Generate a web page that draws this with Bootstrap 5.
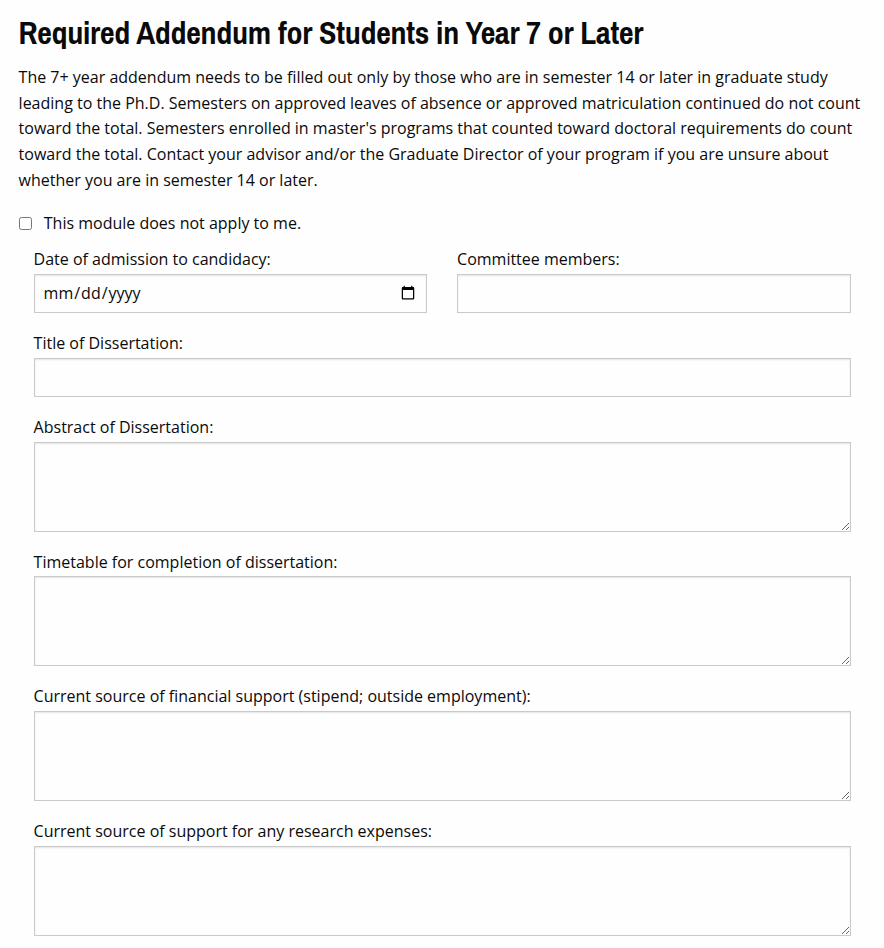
<!DOCTYPE html>
<html lang="en">
<head>
<meta charset="utf-8">
<meta name="viewport" content="width=device-width, initial-scale=1">
<title>Required Addendum</title>
<link href="https://cdn.jsdelivr.net/npm/bootstrap@5.3.0/dist/css/bootstrap.min.css" rel="stylesheet">
<style>
body{font-family:"Open Sans",sans-serif;color:#0a0a0a;background:#fefefe;line-height:1.5;overflow:hidden}
.addendum{padding:11px 18.5px 0 18.6px}
.addendum-title{font-family:"Archivo Narrow","Liberation Sans Narrow","Liberation Sans",sans-serif;font-weight:700;font-size:32px;line-height:44.8px;letter-spacing:-.28px;margin:0 0 9.35px;white-space:nowrap}
.intro{line-height:25.6px;margin-bottom:16px}
.skip-row{height:28px}
.skip-row input{width:13px;height:13px;margin:0 12.2px 0 0}
.fields{padding:0 15px}
.fields .row{--bs-gutter-x:30px}
.fields label{display:block;font-size:16px;line-height:28.8px}
.fields .form-control{border:1px solid #cacaca;border-radius:0;background:#fefefe;box-shadow:inset 0 1px 2px rgba(10,10,10,.1);height:39px;padding:8px;margin-bottom:16px;color:#0a0a0a;line-height:24px}
.fields textarea.form-control{height:90px}
::-webkit-datetime-edit-month-field,::-webkit-datetime-edit-day-field,::-webkit-datetime-edit-year-field{padding:0 1px}
</style>
<script src="https://cdn.jsdelivr.net/npm/bootstrap@5.3.0/dist/js/bootstrap.bundle.min.js"></script>
</head>
<body>
<main class="addendum">
<h2 class="addendum-title">Required Addendum for Students in Year 7 or Later</h2>
<p class="intro">The 7+ year addendum needs to be filled out only by those who are in semester 14 or later in graduate study leading to the Ph.D. Semesters on approved leaves of absence or approved matriculation continued do not count toward the total. Semesters enrolled in master's programs that counted toward doctoral requirements do count toward the total. Contact your advisor and/or the Graduate Director of your program if you are unsure about whether you are in semester 14 or later.</p>
<div class="skip-row d-flex align-items-center mb-2"><input type="checkbox" id="skip"><label for="skip">This module does not apply to me.</label></div>
<form class="fields">
<div class="row">
<div class="col-6"><label for="d">Date of admission to candidacy:</label><input class="form-control" type="date" id="d"></div>
<div class="col-6"><label for="c">Committee members:</label><input class="form-control" type="text" id="c"></div>
</div>
<label for="t">Title of Dissertation:</label><input class="form-control" type="text" id="t">
<label for="a">Abstract of Dissertation:</label><textarea class="form-control" id="a"></textarea>
<label for="m">Timetable for completion of dissertation:</label><textarea class="form-control" id="m"></textarea>
<label for="f">Current source of financial support (stipend; outside employment):</label><textarea class="form-control" id="f"></textarea>
<label for="r">Current source of support for any research expenses:</label><textarea class="form-control" id="r"></textarea>
</form>
</main>
</body>
</html>
